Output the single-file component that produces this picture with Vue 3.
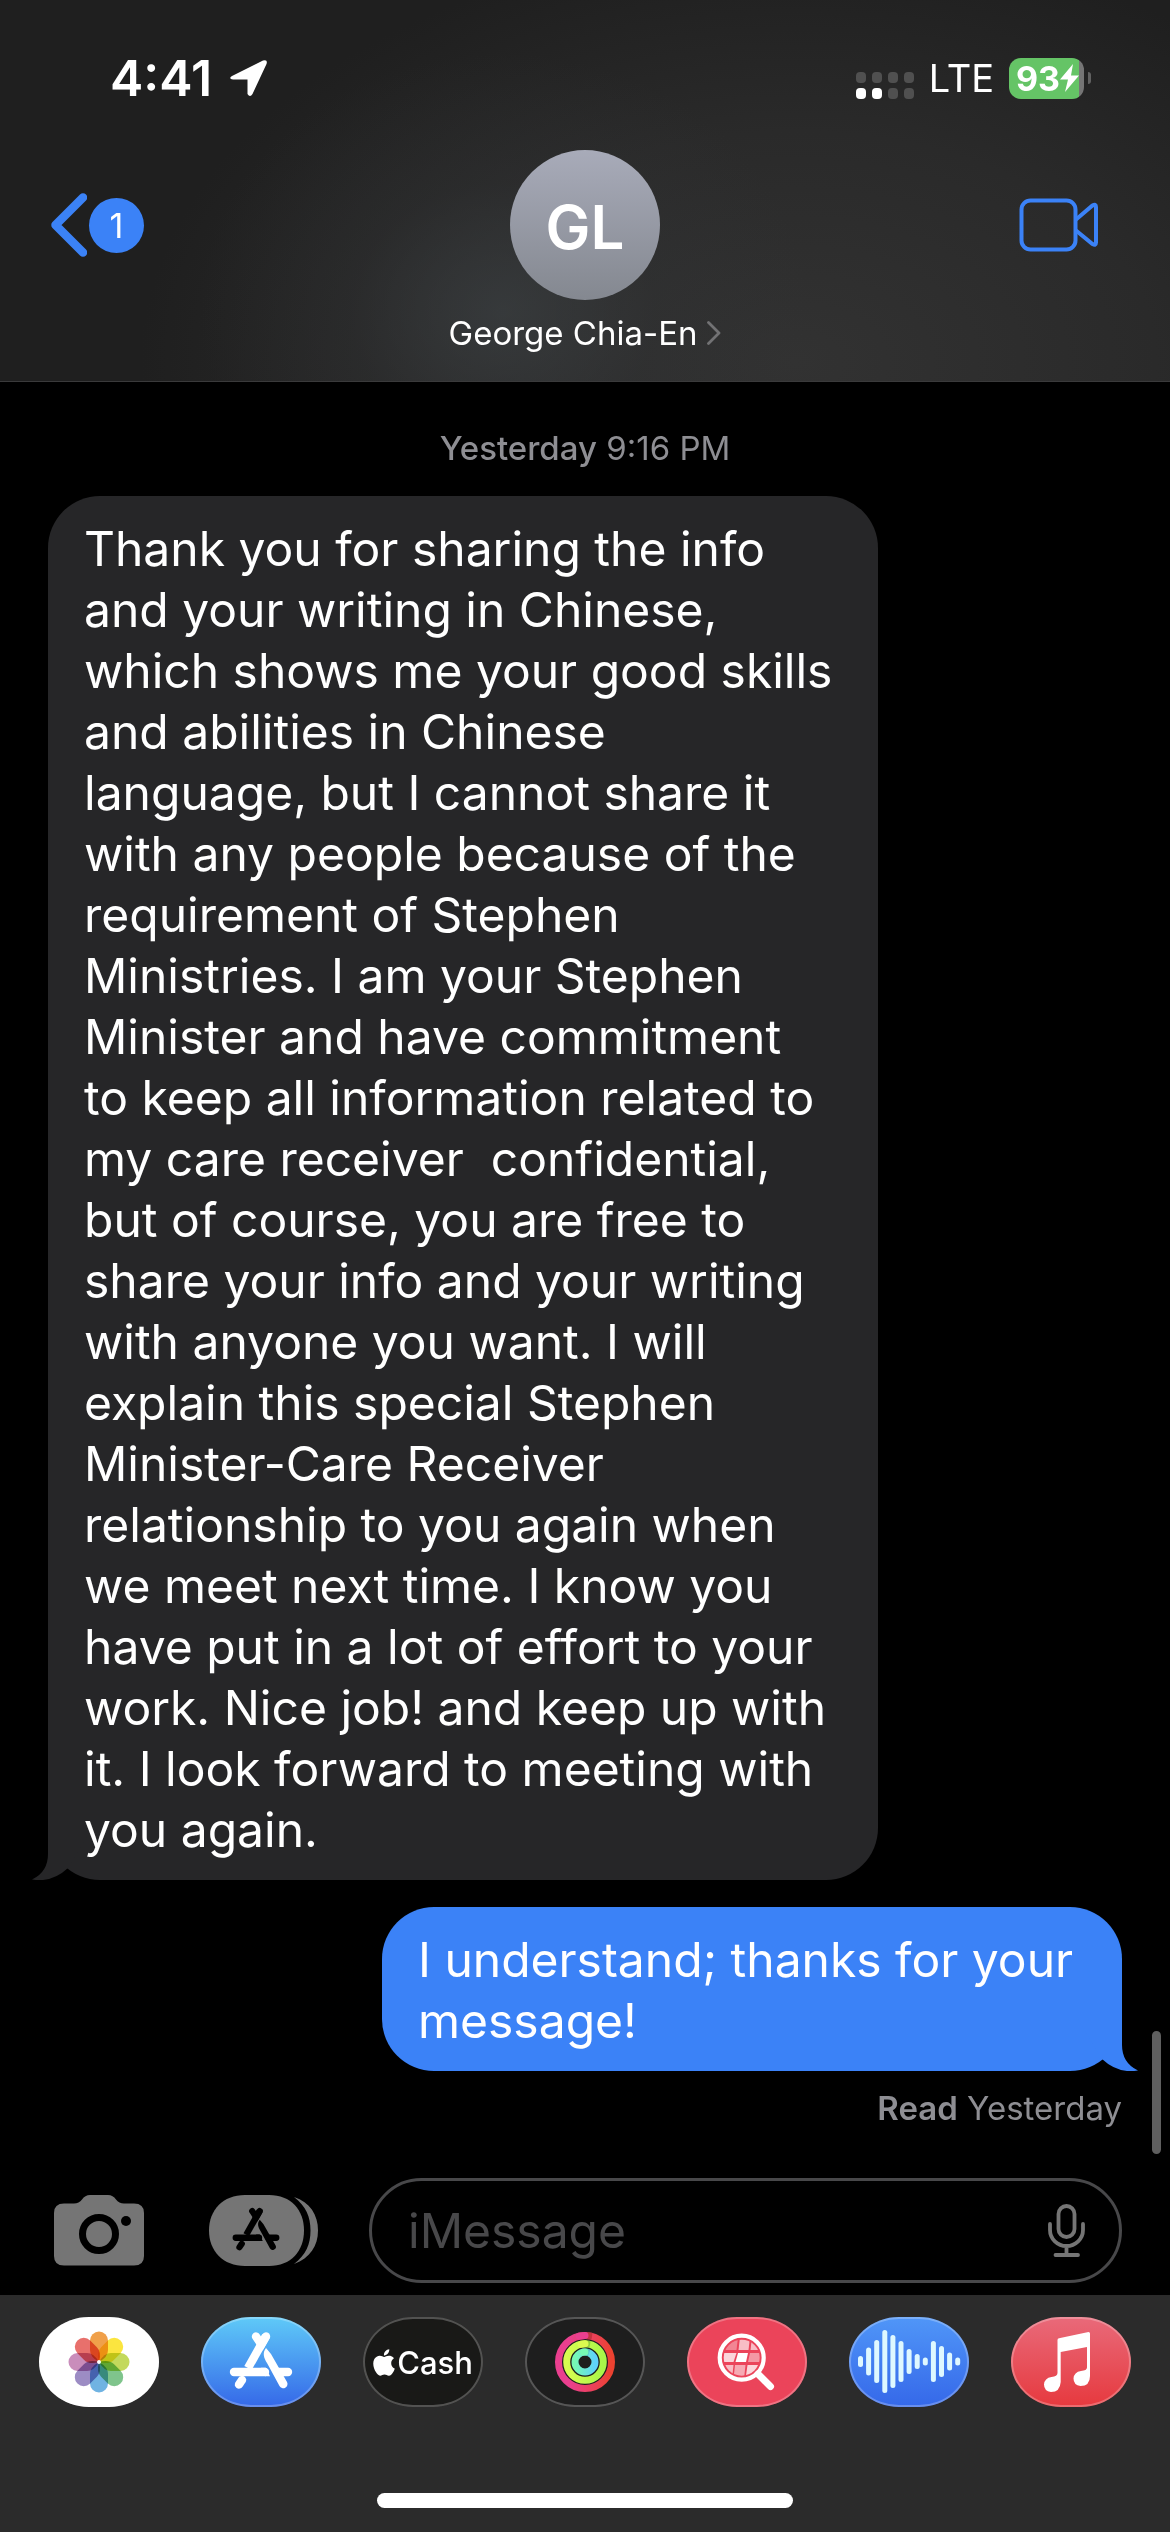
<script setup>
const receivedText =
  'Thank you for sharing the info and your writing in Chinese, which shows me your good skills and abilities in Chinese language, but I cannot share it with any people because of the requirement of Stephen Ministries. I am your Stephen Minister and have commitment to keep all information related to my care receiver  confidential, but of course, you are free to share your info and your writing with anyone you want. I will explain this special Stephen Minister-Care Receiver relationship to you again when we meet next time. I know you have put in a lot of effort to your work. Nice job! and keep up with it. I look forward to meeting with you again.'
const sentText = 'I understand; thanks for your message!'

const signalDots = [false, false, false, false, true, true, false, false]

const petals = ['#f0a04a', '#fbe53f', '#c3d95c', '#7fc48c', '#70b3e2', '#9c8cc4', '#c98dbb', '#e8706c']

const waveHeights = [11, 28, 43, 63, 53, 41, 25, 15, 8, 41, 31, 18, 8]
</script>

<template>
  <div class="screen">
    <svg class="defs" aria-hidden="true">
      <defs>
        <g id="store-mark" fill="none" stroke-width="8.4" stroke-linecap="round">
          <path d="M65 19 47 51" stroke-linecap="butt" />
          <path d="M65 19.5 59 30M55 19.5 60 27" />
          <path d="M33 55H64" />
          <path d="M64 59.2H69L65 50.8H60Z" stroke="none" class="solid" />
          <path d="M77 55H87" />
          <path d="M38 67.5 41 63" />
          <path d="M65 31C61 36 63 41 66 46L78.5 69A4.2 4.2 0 0 0 86 65L70 37Z" stroke="none" class="solid" />
        </g>
      </defs>
    </svg>

    <header class="header">
      <div class="status">
        <div class="status-left">
          <span class="time">4:41</span>
          <svg width="40" height="40" viewBox="0 0 40 40" aria-hidden="true">
            <path d="M3 18 34 2.500Q39 1 37.500 6L23.500 36Q21 40 18.500 36V21.500H4Q-1 20.500 3 18Z" fill="#fff" />
          </svg>
        </div>
        <div class="status-right">
          <div class="signal">
            <i v-for="(on, i) in signalDots" :key="i" :class="{ on }"></i>
          </div>
          <span class="network">LTE</span>
          <div class="battery">
            <div class="cell">
              <span>93</span>
              <svg width="19" height="28" viewBox="0 0 19 28" aria-hidden="true">
                <path d="M13 0 0 15.500H8L5 28 19 11.500H11Z" fill="#fff" />
              </svg>
            </div>
            <i class="nub"></i>
          </div>
        </div>
      </div>

      <nav class="nav">
        <button class="back" type="button" aria-label="Back, 1 unread">
          <svg width="36" height="64" viewBox="0 0 36 64" aria-hidden="true">
            <path d="M32 4.500 4.500 32 32 59.500" fill="none" stroke="#3b82f7" stroke-width="8.500" stroke-linecap="round" stroke-linejoin="round" />
          </svg>
          <span class="unread">1</span>
        </button>
        <button class="contact" type="button">
          <span class="avatar">GL</span>
          <span class="name">
            George Chia-En
            <svg width="14" height="24" viewBox="0 0 14 24" aria-hidden="true">
              <path d="M1.500 1.500 12 12 1.500 22.500" fill="none" stroke="#727274" stroke-width="2.800" stroke-linecap="round" stroke-linejoin="round" />
            </svg>
          </span>
        </button>
        <button class="video" type="button" aria-label="Video call">
          <svg width="80" height="54" viewBox="0 0 80 54" aria-hidden="true">
            <g fill="none" stroke="#3b82f7" stroke-width="4">
              <rect x="2.500" y="2.500" width="54" height="49" rx="9" />
              <path d="M57 21.500 73.500 7.500Q77 5.500 77 9V44.500Q77 48 73.500 46L57 32.500" />
            </g>
          </svg>
        </button>
      </nav>
    </header>

    <main class="thread">
      <p class="stamp"><b>Yesterday</b> 9:16 PM</p>
      <div class="bubble received">
        <svg class="tail" width="60" height="52" viewBox="0 0 60 52" aria-hidden="true">
          <path d="M16 0V26Q16 44 0 51.500Q20 55 36 40L60 0Z" fill="#262628" />
        </svg>
        <p>{{ receivedText }}</p>
      </div>
      <div class="bubble sent">
        <svg class="tail" width="60" height="52" viewBox="0 0 60 52" aria-hidden="true">
          <path d="M44 0V26Q44 44 60 51.500Q40 55 24 40L0 0Z" fill="#3b82f7" />
        </svg>
        <p>{{ sentText }}</p>
      </div>
      <p class="receipt"><b>Read</b> Yesterday</p>
      <i class="scrollbar"></i>
    </main>

    <form class="composer" @submit.prevent>
      <button type="button" aria-label="Camera">
        <svg width="90" height="71" viewBox="0 0 90 71" aria-hidden="true">
          <path d="M10 8.500H20Q25 8.500 28 4.500Q31 0 36 0H54Q59 0 62 4.500Q65 8.500 70 8.500H80Q90 8.500 90 18V61Q90 70.500 80 70.500H10Q0 70.500 0 61V18Q0 8.500 10 8.500Z" fill="#757575" />
          <circle cx="45" cy="39" r="16.500" fill="none" stroke="#000" stroke-width="7" />
          <circle cx="72" cy="26" r="5" fill="#000" />
        </svg>
      </button>
      <button class="apps" type="button" aria-label="Apps">
        <svg width="110" height="71" viewBox="0 0 110 71" aria-hidden="true">
          <path d="M36 0H60C82 0 95 15 95 35.500S82 71 60 71H36C14 71 0 56 0 35.500S14 0 36 0Z" fill="#757575" />
          <path d="M85 2C101 7 109 20 109 35.500S101 63 85 69C97 60 101.500 49 101.500 35.500S97 11 85 2Z" fill="#757575" />
          <use class="dark-mark" href="#store-mark" transform="translate(2 1.500) scale(.75)" />
        </svg>
      </button>
      <label class="field">
        <input type="text" placeholder="iMessage" aria-label="iMessage" />
        <svg width="37" height="54" viewBox="0 0 37 54" aria-hidden="true">
          <g fill="none" stroke="#757575" stroke-width="3.800" stroke-linecap="round">
            <rect x="10.500" y="2" width="16" height="31" rx="8" />
            <path d="M2 20V26A16.500 16 0 0 0 35 26V20M18.500 42V50.500M7.500 51H30" />
          </g>
        </svg>
      </label>
    </form>

    <footer class="drawer">
      <div class="app-row">
        <button class="app photos" type="button" aria-label="Photos">
          <svg viewBox="0 0 120 90" aria-hidden="true">
            <g class="petals" transform="translate(60 45)">
              <path v-for="(color, i) in petals" :key="color" d="M0 0Q-9-5-9-12V-21.500A9 9 0 0 1 9-21.500V-12Q9-5 0 0Z" :fill="color" :transform="`rotate(${i * 45})`" />
            </g>
            <circle cx="60" cy="45" r="2" fill="#fff" />
          </svg>
        </button>
        <button class="app store" type="button" aria-label="App Store">
          <svg viewBox="0 0 120 90" aria-hidden="true"><use class="light-mark" href="#store-mark" /></svg>
        </button>
        <button class="app cash" type="button" aria-label="Apple Cash">
          <svg class="apple" width="22" height="27" viewBox="2 0 20 24" aria-hidden="true">
            <path fill="#fff" d="M12.152 6.896c-.948 0-2.415-1.078-3.960-1.040-2.040.027-3.910 1.183-4.961 3.014-2.117 3.675-.546 9.103 1.519 12.090 1.013 1.454 2.208 3.090 3.792 3.039 1.520-.065 2.090-.987 3.935-.987 1.831 0 2.350.987 3.960.948 1.637-.026 2.676-1.480 3.676-2.948 1.156-1.688 1.636-3.325 1.662-3.415-.039-.013-3.182-1.221-3.220-4.857-.026-3.040 2.480-4.494 2.597-4.559-1.429-2.090-3.623-2.324-4.390-2.376-2-.156-3.675 1.090-4.610 1.090zM15.530 3.830c.843-1.012 1.400-2.427 1.245-3.830-1.207.052-2.662.805-3.532 1.818-.780.896-1.454 2.338-1.273 3.714 1.338.104 2.715-.688 3.559-1.701" />
          </svg>
          <span>Cash</span>
        </button>
        <button class="app fitness" type="button" aria-label="Fitness">
          <svg viewBox="0 0 120 90" aria-hidden="true">
            <defs>
              <linearGradient id="move"><stop offset=".2" stop-color="#ea3f8f" /><stop offset="1" stop-color="#ec4230" /></linearGradient>
              <linearGradient id="exercise"><stop offset="0" stop-color="#d8fb50" /><stop offset="1" stop-color="#a8f749" /></linearGradient>
              <linearGradient id="stand"><stop offset="0" stop-color="#76f9b4" /><stop offset="1" stop-color="#5fd3fb" /></linearGradient>
            </defs>
            <g fill="none" stroke-width="7">
              <circle cx="60" cy="45" r="26.500" stroke="url(#move)" />
              <circle cx="60" cy="45" r="18.300" stroke="url(#exercise)" />
              <circle cx="60" cy="45" r="10" stroke="url(#stand)" />
              <g opacity=".5">
                <path d="M61 18.500 67 19.400" stroke="#9c2a20" />
                <path d="M61 26.700 65 27.500" stroke="#69a52f" />
                <path d="M61 35 64 36" stroke="#3f9bb0" />
              </g>
              <path d="M54 19.200 60 18.500" stroke="#ea3f8f" stroke-linecap="round" />
              <path d="M56 27.200 60 26.700" stroke="#dcfb50" stroke-linecap="round" />
              <path d="M58.500 35H60" stroke="#76f9b4" stroke-linecap="round" />
            </g>
          </svg>
        </button>
        <button class="app images" type="button" aria-label="Images">
          <svg viewBox="0 0 120 90" aria-hidden="true">
            <clipPath id="lens"><circle cx="54.700" cy="40.700" r="18" /></clipPath>
            <g clip-path="url(#lens)" fill="#fff">
              <path opacity=".35" d="M34 20H51L49.500 33H34Z" />
              <path opacity=".65" d="M53 20H63L61.500 33H51.500Z" />
              <path opacity=".65" d="M65 20H76V33H63.500Z" />
              <path opacity=".78" d="M34 36H49.500L46.500 45H34Z" />
              <path d="M51 36H61L59 45H48.500Z" />
              <path opacity=".45" d="M63 36H76V45H61Z" />
              <path opacity=".65" d="M34 48H46.500L45 62H34Z" />
              <path opacity=".55" d="M48 48H58.500L57 62H46.500Z" />
              <path opacity=".78" d="M60.500 48H76V62H58.500Z" />
            </g>
            <circle cx="54.700" cy="40.700" r="22" fill="none" stroke="#fff" stroke-width="4.200" />
            <path d="M71 57 83.500 69.500" stroke="#fff" stroke-width="7" stroke-linecap="round" />
          </svg>
        </button>
        <button class="app audio" type="button" aria-label="Audio messages">
          <svg viewBox="0 0 120 90" aria-hidden="true">
            <rect v-for="(h, i) in waveHeights" :key="i" :x="9 + i * 8.1" :y="44.5 - h / 2" width="5" :height="h" rx="2.5" fill="#def8ff" />
          </svg>
        </button>
        <button class="app music" type="button" aria-label="Music">
          <svg viewBox="0 0 120 90" aria-hidden="true">
            <path fill="#fff" d="M48 21.300 77.500 15Q79 15 79 16.500V59Q79 69 69.500 69Q62.500 68 62.500 61.500Q63 55 70 54Q76 53.500 76 50.500V30L49.700 35V65Q49 75 40 75Q33 74 33 67.500Q33.500 61 40.500 60Q46.500 59.500 46.500 56V23Q46.500 21.500 48 21.300Z" />
          </svg>
        </button>
      </div>
      <i class="home"></i>
    </footer>
  </div>
</template>

<style>
body {
  margin: 0;
  background: #000;
}
</style>

<style scoped>
.screen {
  display: flex;
  flex-direction: column;
  min-height: 100vh;
  background: #000;
  color: #fff;
  font-family: Inter, "Liberation Sans", sans-serif;
}
.defs {
  position: absolute;
  width: 0;
  height: 0;
}
svg {
  display: block;
  flex: none;
}
p {
  margin: 0;
}
button {
  margin: 0;
  padding: 0;
  border: 0;
  background: none;
  color: inherit;
  font: inherit;
  cursor: pointer;
}

.header {
  border-bottom: 1px solid #3a3a3b;
  padding-bottom: 28px;
  background:
    radial-gradient(ellipse 26% 68% at 43% 82%, rgba(62, 67, 70, 0.6), rgba(50, 52, 54, 0.3) 50%, transparent),
    radial-gradient(ellipse 56% 110% at 68% 95%, #323232, #2a2a2a 55%, transparent),
    #1f1f1f;
}
.status {
  display: flex;
  justify-content: space-between;
  height: 84px;
  padding: 36px 79px 0 110px;
}
.status-left,
.status-right {
  display: flex;
  align-items: center;
}
.status-left {
  gap: 17px;
}
.time {
  font-size: 50px;
  font-weight: 600;
}
.signal {
  display: grid;
  grid-template-columns: repeat(4, 10px);
  gap: 5px 6px;
  margin: 14px 15px 0 0;
}
.signal i {
  height: 11px;
  border-radius: 4px;
  background: #505050;
}
.signal .on {
  background: #fff;
}
.network {
  margin-right: 15px;
  font-size: 38px;
}
.battery {
  display: flex;
  align-items: center;
  gap: 4px;
}
.cell {
  display: flex;
  align-items: center;
  justify-content: center;
  box-sizing: border-box;
  width: 75px;
  height: 41px;
  padding-left: 2px;
  border-radius: 12px;
  background: linear-gradient(90deg, #65c466 70px, #757575 70px);
  font-size: 34px;
  font-weight: 700;
}
.nub {
  width: 3px;
  height: 12px;
  border-radius: 0 6px 6px 0;
  background: #616161;
}

.nav {
  display: grid;
  grid-template-columns: 1fr auto 1fr;
  padding: 30px 51px 0;
}
.back,
.video {
  display: flex;
  align-items: center;
  height: 150px;
}
.back {
  justify-self: start;
  gap: 2px;
}
.video {
  justify-self: end;
  margin-right: 20px;
}
.unread {
  width: 55px;
  border-radius: 50%;
  background: #3b82f7;
  font-size: 34px;
  line-height: 55px;
  text-align: center;
}
.contact {
  display: flex;
  flex-direction: column;
  align-items: center;
  gap: 13px;
}
.avatar {
  width: 150px;
  border-radius: 50%;
  background: linear-gradient(#a8abb9, #848890);
  font-size: 60px;
  font-weight: 600;
  line-height: 154px;
  height: 150px;
  text-align: center;
}
.name {
  display: flex;
  align-items: center;
  gap: 10px;
  font-size: 33px;
  line-height: 40px;
}

.thread {
  position: relative;
  display: flex;
  flex: 1;
  flex-direction: column;
  padding: 46px 48px 24px;
}
.stamp,
.receipt {
  color: #8e8e93;
  font-size: 33px;
  line-height: 40px;
}
.stamp {
  margin-bottom: 28px;
  text-align: center;
}
.stamp b {
  font-weight: 500;
}
.receipt {
  margin-top: 17px;
  text-align: right;
}
.receipt b {
  font-weight: 600;
}
.bubble {
  position: relative;
  box-sizing: border-box;
  max-width: 830px;
  padding: 22px 43px 20px 36px;
  border-radius: 52px;
  font-size: 48px;
  line-height: 61px;
  white-space: pre-wrap;
}
.bubble p {
  position: relative;
}
.received {
  align-self: flex-start;
  background: #262628;
}
.sent {
  align-self: flex-end;
  width: 740px;
  margin-top: 27px;
  background: #3b82f7;
}
.tail {
  position: absolute;
  bottom: 0;
}
.received .tail {
  left: -16px;
}
.sent .tail {
  right: -16px;
}
.scrollbar {
  position: absolute;
  right: 9px;
  bottom: 0;
  width: 9px;
  height: 123px;
  border-radius: 5px;
  background: #5f5f5f;
}

.composer {
  display: flex;
  align-items: center;
  padding: 24px 48px 12px 54px;
}
.apps {
  margin: 0 50px 0 65px;
}
.field {
  display: flex;
  flex: 1;
  align-items: center;
  box-sizing: border-box;
  min-width: 0;
  height: 105px;
  padding: 0 34px 0 36px;
  border: 3px solid #48484a;
  border-radius: 53px;
}
.field input {
  flex: 1;
  min-width: 0;
  padding: 0;
  border: 0;
  outline: 0;
  background: none;
  color: #fff;
  font: inherit;
  font-size: 48px;
}
.field input::placeholder {
  color: #48484a;
  opacity: 1;
}

.drawer {
  padding: 22px 39px 24px;
  background: #2b2b2b;
}
.app-row {
  display: flex;
  justify-content: space-between;
}
.app {
  position: relative;
  display: flex;
  align-items: center;
  justify-content: center;
  width: 120px;
  height: 90px;
  border-radius: 50px / 45px;
}
.app > svg:not(.apple) {
  width: 120px;
  height: 90px;
}
.app::after {
  content: "";
  position: absolute;
  inset: 0;
  border: 2px solid rgba(255, 255, 255, 0.25);
  border-radius: inherit;
}
.photos {
  background: #fff;
}
.petals {
  isolation: isolate;
}
.petals path {
  mix-blend-mode: multiply;
}
.store {
  background: linear-gradient(#5fcaf8, #3568e8);
}
.light-mark {
  color: #fff;
  stroke: #fff;
}
.dark-mark {
  color: #000;
  stroke: #000;
}
.solid {
  fill: currentColor;
}
.cash {
  gap: 2px;
  background: #191917;
  font-size: 31px;
  font-weight: 500;
}
.fitness {
  background: #1e1e1e;
}
.images {
  background: #eb445a;
}
.audio {
  background: linear-gradient(#5096f8, #3568e9);
}
.music {
  background: linear-gradient(#e96a7a, #e6393e);
}
.home {
  display: block;
  width: 416px;
  height: 15px;
  margin: 86px auto 0;
  border-radius: 8px;
  background: #fff;
}
</style>
